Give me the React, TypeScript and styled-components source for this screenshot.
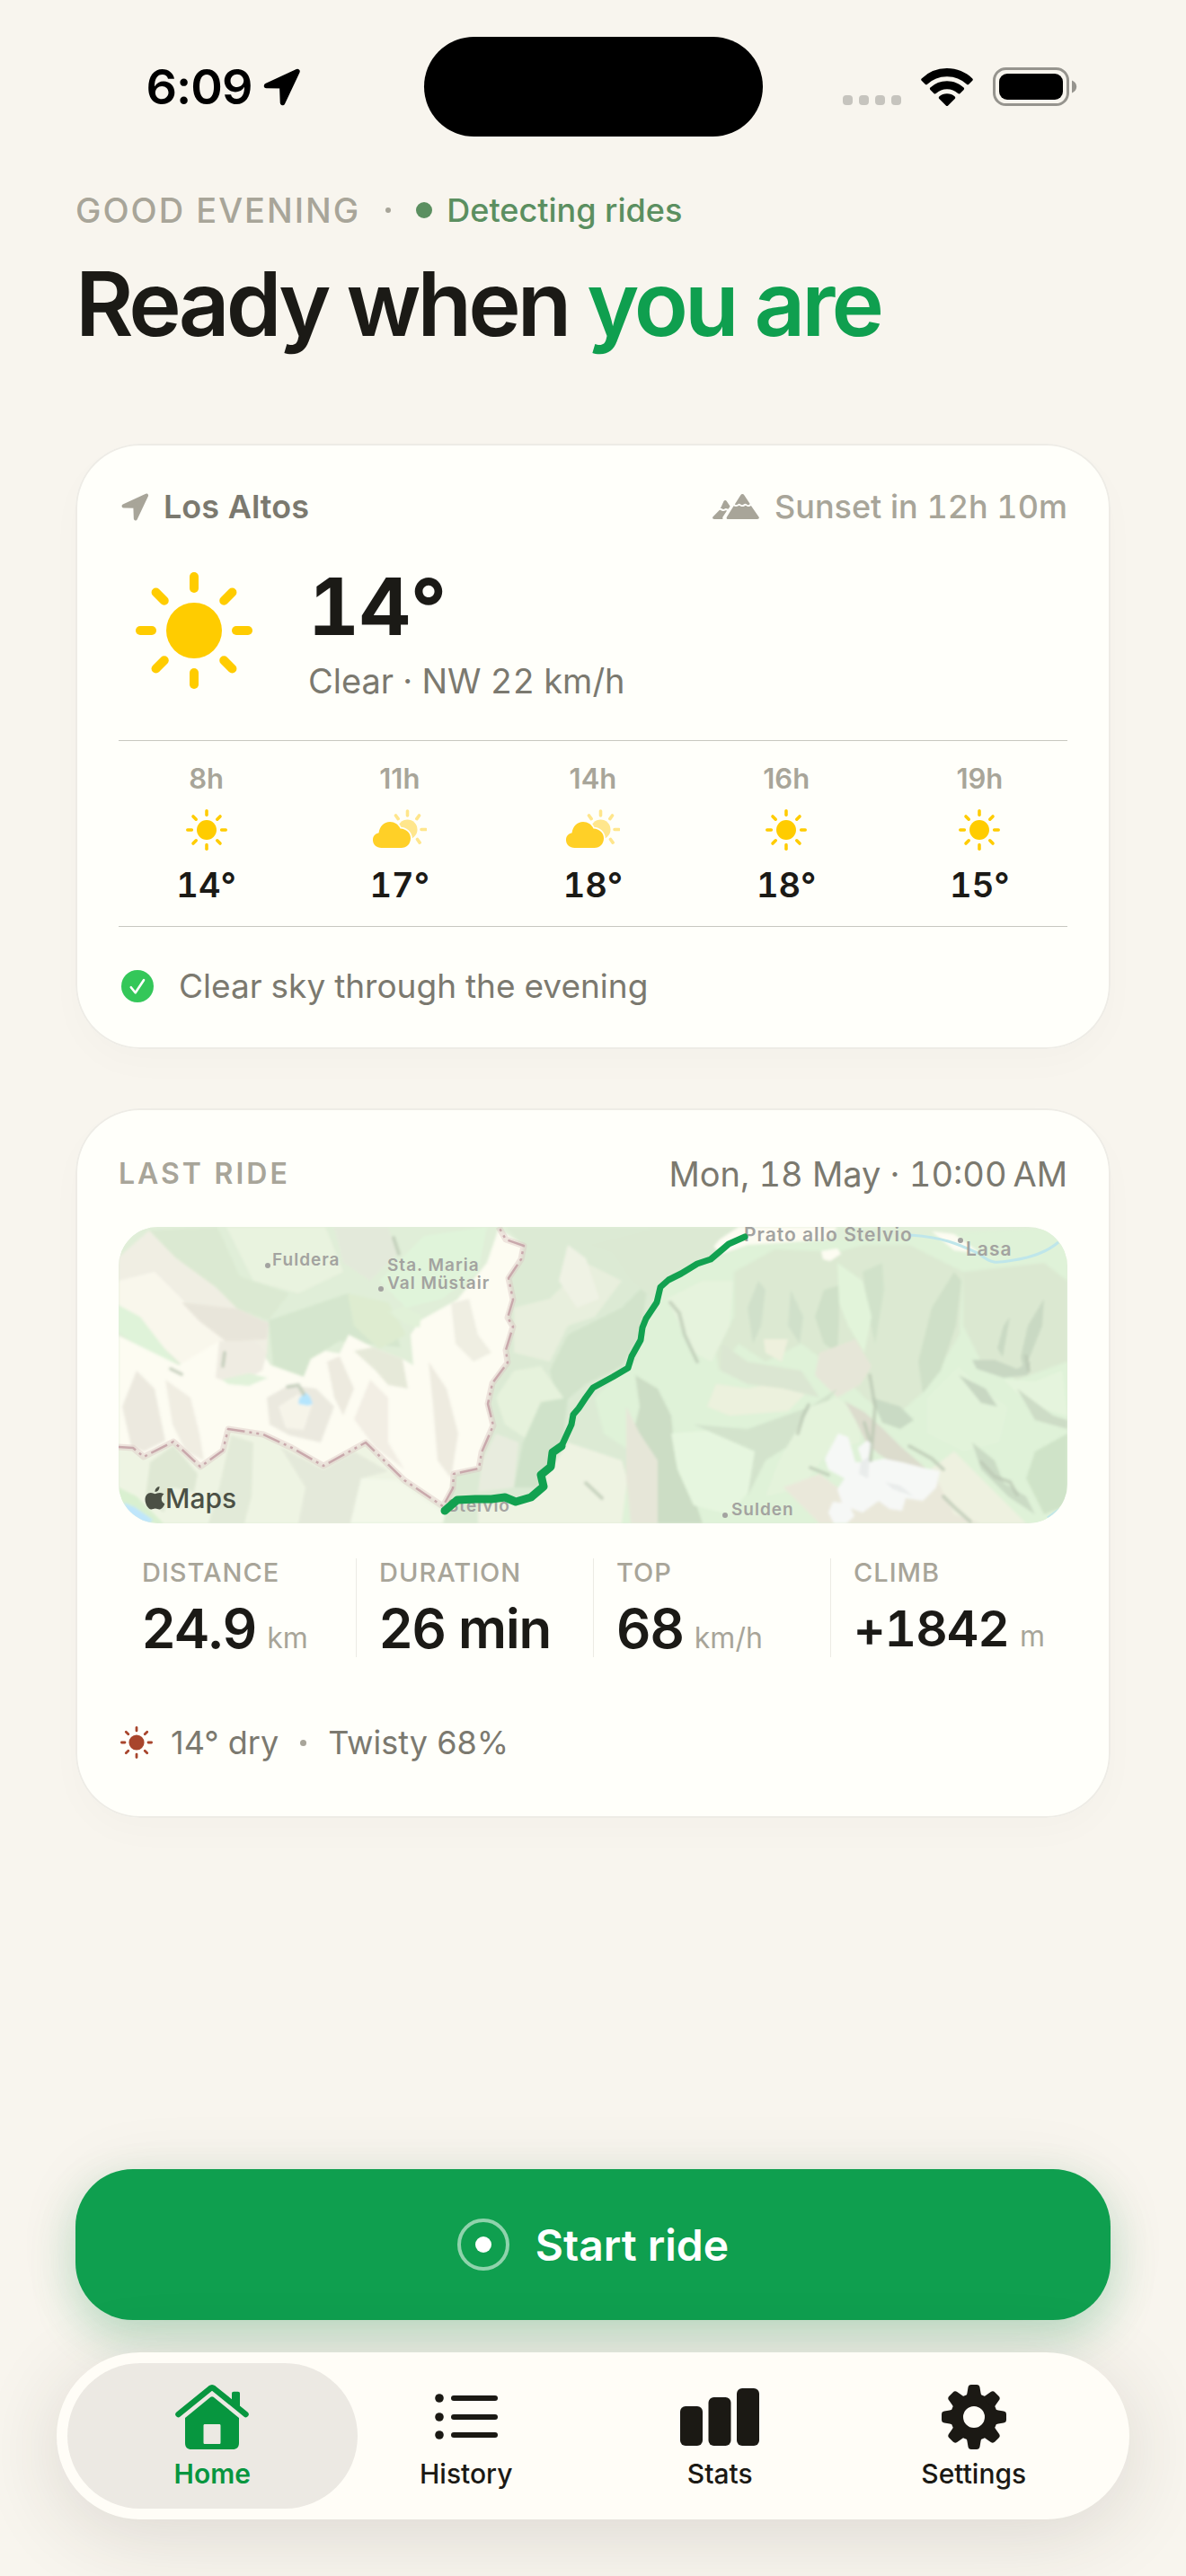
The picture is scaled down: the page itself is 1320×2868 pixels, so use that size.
import React from 'react';
import styled, { createGlobalStyle } from 'styled-components';

const GlobalStyle = createGlobalStyle`
  * {
    box-sizing: border-box;
  }

  body {
    margin: 0;
    background: #f8f5ee;
    color: #1b1a16;
    font-family: Inter, 'Liberation Sans', sans-serif;
    -webkit-font-smoothing: antialiased;
  }
`;

const Page = styled.div`
  display: flex;
  flex-direction: column;
  min-height: 100vh;
  padding: 41px 63px 63px;
  background: #f8f5ee;
`;

const StatusBar = styled.div`
  display: grid;
  grid-template-columns: 1fr 377px 1fr;
  align-items: center;
  height: 111px;
  margin: 0 -63px;
  color: #000000;
`;

const StatusTime = styled.div`
  display: flex;
  align-items: center;
  justify-content: flex-end;
  gap: 12px;
  padding-right: 137px;
  font-size: 54px;
  font-weight: 600;
  line-height: 64px;
  letter-spacing: -1px;
`;

const Island = styled.div`
  height: 111px;
  border-radius: 56px;
  background: #000000;
`;

const StatusIcons = styled.div`
  display: flex;
  align-items: center;
  gap: 22px;
  padding-left: 89px;
`;

const SignalDots = styled.div`
  display: flex;
  gap: 7px;
  margin-top: 30px;
`;

const SignalDot = styled.span`
  width: 11px;
  height: 11px;
  border-radius: 4px;
  background: #c6c4be;
`;

const Content = styled.main`
  display: flex;
  flex-direction: column;
  padding: 60px 21px 0;
`;

const Greeting = styled.div`
  display: flex;
  align-items: center;
  font-size: 38px;
  line-height: 44px;
  font-weight: 500;
  letter-spacing: 2px;
  color: #a8a599;
`;

const Dot = styled.span<{ size: number; color: string; space: number }>`
  width: ${props => props.size}px;
  height: ${props => props.size}px;
  margin: 0 ${props => props.space}px;
  border-radius: 50%;
  background: ${props => props.color};
`;

const Detecting = styled.span`
  display: flex;
  align-items: center;
  gap: 16px;
  font-size: 36px;
  letter-spacing: 0;
  color: #5b8f60;
`;

const Title = styled.h1`
  margin: 22px 0 0;
  font-size: 99px;
  font-weight: 600;
  line-height: 120px;
  letter-spacing: -4px;

  span {
    color: #0f9f4f;
  }
`;

const Card = styled.section`
  display: flex;
  flex-direction: column;
  padding: 48px;
  border-radius: 72px;
  background: #fffffa;
  box-shadow: inset 0 0 0 2px #eeece6, 0 16px 40px rgba(60, 50, 20, 0.02);
`;

const WeatherCard = styled(Card)`
  margin-top: 96px;
  font-variant-numeric: tabular-nums;
`;

const RideCard = styled(Card)`
  margin-top: 66px;
  padding-bottom: 62px;
`;

const CardHeader = styled.div`
  display: flex;
  align-items: center;
  justify-content: space-between;
  line-height: 44px;
`;

const Place = styled.div`
  display: flex;
  align-items: center;
  gap: 16px;
  padding-left: 3px;
  font-size: 36px;
  font-weight: 600;
  color: #7b796f;
`;

const Sunset = styled.div`
  display: flex;
  align-items: center;
  gap: 17px;
  font-size: 36px;
  font-weight: 500;
  color: #a8a599;
`;

const Current = styled.div`
  display: flex;
  align-items: center;
  gap: 62px;
  margin: 38px 0 44px;
  padding-left: 19px;
`;

const CurrentTemp = styled.div`
  font-size: 88px;
  font-weight: 700;
  line-height: 102px;
`;

const BodyText = styled.div<{ $large?: boolean }>`
  font-size: ${props => (props.$large ? 38 : 37)}px;
  line-height: 44px;
  color: #7b796f;
`;

const CurrentText = styled.div`
  display: flex;
  flex-direction: column;
  gap: 10px;
`;

const Hours = styled.div`
  display: grid;
  grid-template-columns: repeat(5, 1fr);
  column-gap: 20px;
  padding: 24px 0;
  border-top: 1px solid #c8c8c0;
  border-bottom: 1px solid #c8c8c0;
`;

const Hour = styled.div`
  display: flex;
  flex-direction: column;
  align-items: center;
  gap: 16px;
`;

const HourLabel = styled.div`
  font-size: 31px;
  font-weight: 600;
  line-height: 36px;
  font-variant-numeric: normal;
  color: #a8a599;
`;

const HourTemp = styled.div`
  font-size: 38px;
  font-weight: 600;
  line-height: 44px;
`;

const Alert = styled.div`
  display: flex;
  align-items: center;
  gap: 28px;
  margin-top: 44px;
  padding-left: 3px;
`;

const RideHeader = styled(CardHeader)`
  font-variant-numeric: tabular-nums;

  > * {
    line-height: 50px;
  }
`;

const Overline = styled.h2`
  margin: 0;
  font-size: 32px;
  font-weight: 600;
  letter-spacing: 3px;
  color: #a8a599;
`;

const MapFrame = styled.div`
  height: 330px;
  margin-top: 34px;
  border-radius: 44px;
  overflow: hidden;

  svg {
    display: block;
    width: 100%;
    height: 100%;
  }
`;

const Stats = styled.dl`
  display: grid;
  grid-template-columns: repeat(4, 1fr);
  margin: 39px 0 73px;
`;

const Stat = styled.div`
  display: flex;
  flex-direction: column;
  gap: 14px;
  padding-left: 25px;
  border-left: 1px solid #ecebe4;

  &:first-child {
    border-left-color: transparent;
  }
`;

const StatLabel = styled.dt`
  font-size: 29px;
  font-weight: 500;
  line-height: 32px;
  letter-spacing: 1px;
  color: #a8a599;
`;

const StatValue = styled.dd<{ $compact?: boolean }>`
  margin: 0;
  font-size: ${props => (props.$compact ? 55 : 60)}px;
  font-weight: 600;
  line-height: 64px;
  white-space: nowrap;
  letter-spacing: -1px;
  font-variant-numeric: ${props => (props.$compact ? 'tabular-nums' : 'normal')};
`;

const Unit = styled.span`
  margin-left: 12px;
  font-size: 32px;
  font-weight: 400;
  line-height: 32px;
  letter-spacing: 0;
  color: #a8a599;
`;

const RideMeta = styled.div`
  display: flex;
  align-items: center;
  padding-left: 2px;
  font-size: 36px;
  line-height: 44px;
  color: #7b796f;

  svg {
    margin-right: 20px;
  }
`;

const Dock = styled.footer`
  display: flex;
  flex-direction: column;
  gap: 36px;
  margin-top: auto;
`;

const StartButton = styled.button`
  display: flex;
  align-items: center;
  justify-content: center;
  gap: 29px;
  height: 168px;
  margin: 0 21px;
  padding: 0;
  border: 0;
  border-radius: 64px;
  background: #0f9f4f;
  box-shadow: 0 20px 50px rgba(15, 159, 79, 0.24), 0 0 80px rgba(40, 40, 20, 0.06);
  color: #ffffff;
  font-family: inherit;
  font-size: 48px;
  font-weight: 600;
  cursor: pointer;
`;

const TabBar = styled.nav`
  position: relative;
  display: grid;
  grid-template-columns: repeat(4, 1fr);
  height: 186px;
  padding: 12px 32px;
  border-radius: 93px;
  background: #fffdf7;
  box-shadow: 0 16px 90px rgba(50, 45, 35, 0.14);
`;

const Tab = styled.a<{ $active?: boolean }>`
  display: flex;
  flex-direction: column;
  align-items: center;
  gap: 9px;
  margin: 0 -20px;
  padding-top: 24px;
  border-radius: 81px;
  background: ${props => (props.$active ? '#ece9e3' : 'transparent')};
  color: ${props => (props.$active ? '#07963f' : '#1b1914')};
  font-size: 30px;
  font-weight: ${props => (props.$active ? 600 : 500)};
  line-height: 36px;
  text-decoration: none;
`;

const ArrowIcon = ({ size, color }: { size: number; color: string }) => (
  <svg width={size} height={size} viewBox="0 0 42 42">
    <path
      d="M3.500 19.500 38 3.500 21.500 38.500 20.800 19.800Z"
      fill={color}
      stroke={color}
      strokeWidth="5.500"
      strokeLinejoin="round"
    />
  </svg>
);

const WifiIcon = () => (
  <svg width="58" height="42" viewBox="0 0 58 42" fill="#000000">
    <path d="M29 0C40 0 50 4.300 57.300 11.400c.7.700.7 1.700 0 2.400l-4 4c-.7.700-1.700.7-2.400 0A31.300 31.300 0 0 0 29 9.200 31.300 31.300 0 0 0 7.100 17.800c-.7.700-1.700.7-2.400 0l-4-4c-.7-.7-.7-1.700 0-2.400A40.500 40.500 0 0 1 29 0Z" />
    <path d="M29 14.200c7.200 0 13.700 2.800 18.600 7.300.7.700.7 1.700 0 2.400l-4 4c-.7.700-1.700.7-2.400.1A18 18 0 0 0 29 23.300a18 18 0 0 0-12.200 4.700c-.7.600-1.700.6-2.400-.1l-4-4c-.7-.7-.7-1.700 0-2.400A27.300 27.300 0 0 1 29 14.200Z" />
    <path d="M29 28.300c3.300 0 6.400 1.200 8.700 3.200.7.700.7 1.700 0 2.400l-7.500 7.500c-.7.700-1.700.7-2.400 0l-7.500-7.500c-.7-.7-.7-1.700 0-2.400a13.300 13.300 0 0 1 8.700-3.200Z" />
  </svg>
);

const BatteryIcon = () => (
  <svg width="94" height="43" viewBox="0 0 94 43">
    <rect x="1.500" y="1.500" width="82" height="40" rx="13" fill="none" stroke="#96948e" strokeWidth="3" />
    <rect x="7" y="7" width="71" height="29" rx="9" fill="#000000" />
    <path d="M88 14.500c3.200 1.200 5.200 3.800 5.200 7s-2 5.800-5.200 7Z" fill="#96948e" />
  </svg>
);

const SunIcon = ({ size, color }: { size: number; color: string }) => (
  <svg width={size} height={size} viewBox="0 0 130 130">
    <circle cx="65" cy="65" r="31" fill={color} />
    {[0, 45, 90, 135, 180, 225, 270, 315].map(angle => (
      <path
        key={angle}
        d="M65 5v13"
        stroke={color}
        strokeWidth="10"
        strokeLinecap="round"
        transform={`rotate(${angle} 65 65)`}
      />
    ))}
  </svg>
);

const CloudSunIcon = () => (
  <svg width="60" height="46" viewBox="0 0 60 46">
    <g stroke="#ffe68c" strokeWidth="3.600" strokeLinecap="round">
      <path d="M38.500 2v5M25.500 7l2.600 3.600M51.500 7l-2.600 3.600M54 22.500h5M49.500 33.500l2.600 3.600" />
    </g>
    <circle cx="38.500" cy="22.500" r="11" fill="#ffe68c" />
    <path
      d="M9.500 43C4 43 0 39 0 34.200c0-4.200 2.600-7.200 6.600-8C7.300 19.300 12.400 14 19 14c5.200 0 9.400 2.900 11.500 7.500 6.500.2 11.500 4.800 11.500 10.700C42 38.400 37.600 43 31.500 43Z"
      fill="#ffd027"
      stroke="#fffffa"
      strokeWidth="3.500"
      paintOrder="stroke"
    />
  </svg>
);

const MountainIcon = () => (
  <svg width="52" height="28" viewBox="0 0 52 28" fill="#a8a599">
    <path d="M31.300 1.200c1-1.500 3-1.500 4 0l6.400 9.800c-1.200 1.500-2.600 1.500-3.800.3-1.200-.9-2-.9-3.200.2-1.200 1-2.300 1-3.500 0-1.100-1-1.900-1-3.100-.1-1.100.8-2.200.8-3.300 0Z" />
    <path d="M23.600 13.200c1.600 1 3.500.9 5 0 1-.7 1.200-.7 2.200 0 1.600 1.200 3.500 1.200 5.100 0 .8-.7 1.100-.7 2 0 1.500 1.200 3.500 1.100 5-.2l8.600 12.400c.9 1.500 0 2.600-1.600 2.600H17.400c-1.600 0-2.300-1.100-1.400-2.600Z" />
    <path d="M12.500 8c.8-1.200 2.500-1.200 3.300 0l3.800 5.800-1.900 2.800c-1.200.3-1.900-.6-3-.5-1.100.2-1.600 1.100-2.900.8-1-.3-1.400-1-2.900-.9Z" />
    <path d="M7.700 17.900c1.400-.3 2 1 3.700 1.200 1.700.1 2.300-1 3.400-.9l1.300.3-4.300 6.500c-.7 1.100-.7 2.100-.2 3H1.900C.3 28-.4 26.900.4 25.400Z" />
  </svg>
);

const CheckIcon = () => (
  <svg width="36" height="36" viewBox="0 0 36 36">
    <circle cx="18" cy="18" r="18" fill="#34c759" />
    <path d="m10.800 19.200 4.900 6 9.300-14" fill="none" stroke="#ffffff" strokeWidth="2.600" strokeLinecap="round" strokeLinejoin="round" />
  </svg>
);

const RecordIcon = () => (
  <svg width="58" height="58" viewBox="0 0 58 58">
    <circle cx="29" cy="29" r="27" fill="none" stroke="#8fd3ac" strokeWidth="4" />
    <circle cx="29" cy="29" r="9" fill="#ffffff" />
  </svg>
);

const HomeIcon = () => (
  <svg width="82" height="72" viewBox="0 0 82 72" fill="currentColor">
    <path d="M3.500 33 39 4.200c1.300-1 2.700-1 4 0L78.500 33" fill="none" stroke="currentColor" strokeWidth="6.500" strokeLinecap="round" strokeLinejoin="round" />
    <path d="M63 21V10c0-1.500.8-2.300 2.200-2.300h4.600c1.400 0 2.200.8 2.200 2.300v18Z" />
    <path
      fillRule="evenodd"
      d="M39.400 13.800c1-.8 2.200-.8 3.200 0L71 37v28c0 4.500-2.500 7-7 7H18c-4.500 0-7-2.500-7-7V37ZM33 44c-1 0-1.500.5-1.500 1.500v19c0 1 .5 1.500 1.500 1.500h16c1 0 1.500-.5 1.500-1.500v-19c0-1-.5-1.500-1.500-1.500Z"
    />
  </svg>
);

const ListIcon = () => (
  <svg width="70" height="72" viewBox="0 0 70 72" fill="currentColor">
    {[15, 36, 56].map(y => (
      <React.Fragment key={y}>
        <circle cx="5" cy={y} r="4.800" />
        <rect x="18" y={y - 3} width="52" height="6" rx="3" />
      </React.Fragment>
    ))}
  </svg>
);

const BarsIcon = () => (
  <svg width="88" height="72" viewBox="0 0 88 72" fill="currentColor">
    <rect x="0" y="24" width="25" height="44" rx="6" />
    <rect x="31.500" y="14" width="25" height="54" rx="6" />
    <rect x="63" y="4" width="25" height="64" rx="6" />
  </svg>
);

const GearIcon = () => (
  <svg width="72" height="72" viewBox="0 0 72 72">
    <circle cx="36" cy="36" r="19" fill="none" stroke="currentColor" strokeWidth="14" />
    {[0, 45, 90, 135, 180, 225, 270, 315].map(angle => (
      <path
        key={angle}
        d="M25 14c2.500-1 3-2.500 3.500-5l1-6C29.800 1 31 0 33 0h6c2 0 3.200 1 3.500 3l1 6c.5 2.500 1 4 3.500 5Z"
        fill="currentColor"
        transform={`rotate(${angle} 36 36)`}
      />
    ))}
  </svg>
);

// hillshade patches, drawn back to front
const terrain: { fill: string; d: string }[] = [
  { fill: '#e0eed8', d: 'M0 0H460V330H0Z' },
  { fill: '#dbe9d2', d: 'M34 4 110 0 135 55 190 74 167 104 132 91 63 34Z' },
  { fill: '#e9f3df', d: 'M120 0 230 0 250 50 200 74 150 60Z' },
  { fill: '#e3e9da', d: 'M240 0 300 0 310 30 280 60 250 40Z' },
  { fill: '#e0f4da', d: 'M340 10 410 0 400 50 360 80 320 90 290 60Z' },
  { fill: '#f0eee3', d: 'M0 34 34 4 63 34 108 67 132 91 167 107 165 141 112 174 71 154 0 87Z' },
  { fill: '#f9f7ec', d: 'M0 60 40 50 80 90 120 110 140 130 112 174 71 154 0 87Z' },
  { fill: '#e8e5da', d: 'M70 84 132 91 167 107 165 125 120 128 90 105Z' },
  { fill: '#dff3d9', d: 'M0 87 24 100 63 151 50 154 0 117Z' },
  { fill: '#d5e6ce', d: 'M167 104 255 74 300 90 314 134 246 127 214 147 206 167 172 154Z' },
  { fill: '#deecd0', d: 'M255 74 300 84 320 120 290 136 262 110Z' },
  { fill: '#fdfcf2', d: 'M0 121 67 154 112 127 152 127 169 154 206 167 214 147 230 138 246 141 256 120 283 134 316 147 328 154 325 120 336 104 377 81 410 40 423 2 451 21 448 36 434 57 439 81 433 101 439 111 431 137 433 151 416 174 411 197 417 221 404 251 401 269 373 275 372 291 361 311 318 282 275 240 228 266 193 246 161 231 122 225 116 249 91 267 61 239 28 256 16 246 0 245Z' },
  { fill: '#efece2', d: 'M112 127 152 127 165 140 160 160 130 176 108 168Z' },
  { fill: '#ece9df', d: 'M20 160 40 180 52 238 28 250 14 244 4 200Z' },
  { fill: '#f0ede2', d: 'M52 170 80 190 90 230 95 260 75 250 60 220Z' },
  { fill: '#ebe9df', d: 'M165 190 190 176 220 180 240 200 225 240 190 232 168 220Z' },
  { fill: '#f6f4e9', d: 'M178 200 200 186 216 196 206 226 186 224Z' },
  { fill: '#e6e9d9', d: 'M262 138 283 134 316 147 322 180 300 176 286 160Z' },
  { fill: '#f2eee4', d: 'M280 170 300 190 300 240 318 270 285 245 262 214Z' },
  { fill: '#edeadf', d: 'M232 150 246 144 262 180 250 210 240 190Z' },
  { fill: '#efeee2', d: 'M370 85 390 80 400 120 415 140 395 150 375 130Z' },
  { fill: '#eeebe0', d: 'M345 150 365 180 378 230 370 280 355 260 350 200Z' },
  { fill: '#e1f2da', d: 'M115 170 145 163 166 168 145 177 122 175Z' },
  { fill: '#e1f1d8', d: 'M301 95 316 88 337 98 335 112 318 108Z' },
  { fill: '#eef4e3', d: 'M0 245 16 246 28 256 61 239 91 267 116 249 122 225 161 231 193 246 228 266 275 240 318 282 361 311 440 306 440 330H0Z' },
  { fill: '#dfe8d4', d: 'M35 262 61 243 88 275 84 295 60 290 50 318 30 300Z' },
  { fill: '#e2ead8', d: 'M125 232 150 240 148 300 140 330 100 330 112 290Z' },
  { fill: '#e4e9da', d: 'M180 245 228 270 262 250 300 272 270 280 258 330 200 330 208 290Z' },
  { fill: '#f3f8e9', d: 'M270 280 310 282 361 318 380 330H258Z' },
  { fill: '#d9f0d0', d: 'M0 290 20 300 50 330 0 330Z' },
  { fill: '#bfe6fb', d: 'M6 307 18 312 38 326 34 330 20 330 8 318Z' },
  { fill: '#b5e5fd', d: 'M208 184 213 189 216 197 211 199 200 197 201 191Z' },
  { fill: '#dcead4', d: 'M431 0H700V330H361L373 275 401 269 404 251 417 221 411 197 416 174 433 151 431 137 439 111 433 101 439 81 434 57 448 36 451 21Z' },
  { fill: '#e8efdd', d: 'M440 90 480 80 520 40 560 60 530 100 500 110 480 150 440 140Z' },
  { fill: '#eff2e4', d: 'M500 20 520 35 535 80 510 90 490 60Z' },
  { fill: '#d2e3cb', d: 'M500 120 560 90 590 60 580 120 560 155 520 175 490 200 480 160Z' },
  { fill: '#e6f2dc', d: 'M440 160 470 155 495 190 490 220 460 240 430 220 420 190Z' },
  { fill: '#cfe2c9', d: 'M470 195 500 190 495 235 480 260 465 290 440 290 450 240Z' },
  { fill: '#e8ecde', d: 'M420 230 445 240 440 290 400 295 405 260Z' },
  { fill: '#eef3e2', d: 'M400 310 460 303 500 240 560 260 580 330H400Z' },
  { fill: '#dff2d8', d: 'M530 190 560 160 575 150 600 67 640 45 700 20 1056 0V330H560L570 250 540 230Z' },
  { fill: '#fdfcf2', d: 'M690 0 660 20 672 30 700 20 790 14 800 0Z' },
  { fill: '#dce9d3', d: 'M520 20 600 0 680 0 660 25 610 55 595 80 570 60 550 30Z' },
  { fill: '#dce9d2', d: 'M685 50 730 25 800 28 830 20 880 20 940 50 936 120 900 180 860 215 830 190 800 160 760 130 720 150 690 130 668 160 665 140 685 100Z' },
  { fill: '#e6f3dd', d: 'M610 80 650 60 684 60 680 110 660 150 640 140Z' },
  { fill: '#cfe0c8', d: 'M930 50 938 60 932 110 915 160 895 185 890 150 905 90Z' },
  { fill: '#cfe0c8', d: 'M785 70 802 65 802 100 800 140 785 130 775 100Z' },
  { fill: '#d1e2ca', d: 'M828 50 850 40 852 70 842 130 835 100Z' },
  { fill: '#e2f4da', d: 'M800 40 828 60 838 100 830 140 812 110 802 85Z' },
  { fill: '#d0e0ca', d: 'M712 60 720 70 715 110 706 130 700 90ZM748 70 762 100 758 130 745 110Z' },
  { fill: '#e6e6d8', d: 'M780 140 820 125 838 155 826 175 800 190 775 165Z' },
  { fill: '#eef0dd', d: 'M718 125 745 125 738 150 720 140Z' },
  { fill: '#ecf1dd', d: 'M665 175 700 180 740 172 765 185 745 205 680 210 655 200Z' },
  { fill: '#dbe6d2', d: 'M672 130 700 150 760 160 780 190 740 180 700 175 670 160Z' },
  { fill: '#ccddc5', d: 'M575 165 600 180 615 210 620 260 640 300 650 330 600 330 570 240 580 200Z' },
  { fill: '#e6e6d8', d: 'M565 200 580 230 600 260 600 330 570 330 565 280Z' },
  { fill: '#e6f6df', d: 'M615 230 680 225 720 240 705 290 680 320 640 310 622 270Z' },
  { fill: '#d3e3cc', d: 'M640 220 700 225 770 200 800 180 760 235 720 260 700 300 708 250Z' },
  { fill: '#e4f3db', d: 'M770 200 800 190 825 210 825 240 790 250 760 290 720 300 735 260Z' },
  { fill: '#dcdccd', d: 'M808 194 830 206 850 224 870 244 900 270 880 275 845 252 832 240 820 215Z' },
  { fill: '#c9dac4', d: 'M838 190 870 200 885 215 870 225 850 218Z' },
  { fill: '#e2f3da', d: 'M900 190 935 155 960 180 990 200 980 240 940 250 900 230Z' },
  { fill: '#dbe8d1', d: 'M940 50 1030 40 1056 60 1056 150 1000 170 960 150 940 110Z' },
  { fill: '#c9d9c3', d: 'M1012 110 1030 80 1028 110 1012 150 1008 162 1004 145ZM985 110 992 100 984 145 978 135Z' },
  { fill: '#c8d7c2', d: 'M950 148 975 148 1000 158 1015 150 1012 165 985 168 955 158ZM935 165 965 180 978 200 960 196Z' },
  { fill: '#e5f4dd', d: 'M985 170 1020 172 1050 160 1056 210 1020 200 1000 185Z' },
  { fill: '#cddcc6', d: 'M1000 180 1040 210 1056 215 1056 225 1020 215Z' },
  { fill: '#cbdbc5', d: 'M950 240 975 260 985 285 1010 300 1020 320 990 300 960 270Z' },
  { fill: '#eef1e0', d: 'M890 280 930 250 970 290 1010 330 900 330Z' },
  { fill: '#cfe3c8', d: 'M1020 250 1056 230V310L1030 320 1010 280Z' },
  { fill: '#eae8da', d: 'M740 290 780 275 800 290 870 300 905 270 930 320 960 330H780Z' },
  { fill: '#f6f8f6', d: 'M801 230 812 234 820 262 828 262 823 246 834 237 840 243 832 262 852 258 872 262 895 268 914 272 910 290 895 305 876 302 872 316 858 314 846 305 828 318 806 310 800 292 808 280 790 270 786 258ZM795 306 812 308 819 322 810 330H796L790 318Z' },
  { fill: '#e9eceb', d: 'M826 262 836 255 834 280 824 275ZM853 284 870 288 885 300 862 292Z' },
  { fill: '#fdfcf2', d: 'M782 27 800 24 804 30 792 38 784 36ZM905 5 930 8 960 30 930 26Z' },
];

// soft valley shadows along the ridges
const creases = [
  'M614 84 624 96 630 120 644 150',
  'M768 198 762 210 756 230',
  'M830 218 836 238',
  'M837 260 842 200 836 165',
  'M770 268 790 276',
  'M1010 144 1013 160',
  'M880 244 905 258 918 270',
  'M960 262 975 278 992 284 1000 298',
  'M58 158 70 164',
  'M188 178 200 176 206 186',
  'M118 140 116 155',
  'M312 30 306 12',
  'M520 285 538 302',
  'M918 300 930 312 948 328',
];

const frontier =
  'M0 245 16 246 28 256 61 239 91 267 116 249 122 225 161 231 193 246 228 266 275 240 318 282 361 311 372 291 373 275 401 269 404 251 417 221 411 197 416 174 433 151 431 137 439 111 433 101 439 81 434 57 448 36 451 21 431 14 423 0';

const RouteMap = () => (
  <svg viewBox="0 0 1056 330" preserveAspectRatio="xMidYMid slice" role="img" aria-label="Route map">
    <defs>
      <filter id="relief" x="-5%" y="-5%" width="110%" height="110%">
        <feGaussianBlur stdDeviation="1.600" />
      </filter>
    </defs>
    <rect width="1056" height="330" fill="#e1efd9" />
    <g filter="url(#relief)">
      {terrain.map(patch => (
        <path key={patch.d} d={patch.d} fill={patch.fill} />
      ))}
      {creases.map(d => (
        <path key={d} d={d} fill="none" stroke="#b9c6b2" strokeWidth="4" strokeLinecap="round" opacity="0.7" />
      ))}
    </g>
    <path d={frontier} fill="none" stroke="#d9c3c0" strokeWidth="7" strokeLinejoin="round" opacity="0.4" />
    <path d={frontier} fill="none" stroke="#c9a9ac" strokeWidth="2.500" strokeDasharray="20 5 3 5 3 5" strokeLinejoin="round" />
    <path d="M880 9C920 11 940 22 958 30c14 12 20 10 38 7 20-3 36-8 50-20M1056 308l-22 16" fill="none" stroke="#bfe6ea" strokeWidth="3" />
    <g fill="#a3a3a0" fontSize="19" fontWeight="600" letterSpacing="1" fontFamily="Inter, sans-serif">
      <circle cx="166" cy="43" r="3" />
      <text x="171" y="43">Fuldera</text>
      <text x="299" y="49">Sta. Maria</text>
      <circle cx="292" cy="69" r="3" />
      <text x="299" y="69">Val Müstair</text>
      <text x="696" y="16" fontSize="21">Prato allo Stelvio</text>
      <circle cx="937" cy="15" r="3" />
      <text x="943" y="32" fontSize="21">Lasa</text>
      <circle cx="675" cy="321" r="3" />
      <text x="682" y="321">Sulden</text>
      <text x="366" y="317">Stelvio</text>
    </g>
    <path
      d="M697 11 679 19 672 25 659 36 644 41 626 52 612 59 603 67 599 84 587 102 583 112 581 126 571 144 567 157 550 167 528 179 520 190 512 202 506 209 504 220 493 244 483 251 481 267"
      fill="none"
      stroke="#12a150"
      strokeWidth="7"
      strokeLinecap="round"
      strokeLinejoin="round"
    />
    <path
      d="M493 244 483 251 481 267 470 276 473 289 459 301 442 306 430 301 415 303 397 303 377 304 363 316"
      fill="none"
      stroke="#12a150"
      strokeWidth="9"
      strokeLinecap="round"
      strokeLinejoin="round"
    />
    <g fill="#4b5045">
      <path d="M46 296c2.500 0 4.500 1.500 4.500 1.500-4 2.500-3.500 9 .8 10.700-1 3.300-3.800 6.300-6 6.300-1.800 0-2.500-1-4.500-1s-2.800 1-4.500 1C33 314.500 29.500 308.500 29.500 303.500c0-4.500 2.800-7.500 6.300-7.500 2 0 3.500 1.200 4.700 1.200S43.500 296 46 296Z" />
      <path d="M45.500 289c.2 3-2 6-5 6-.3-3 2.200-5.800 5-6Z" />
      <text x="52" y="313" fontSize="30" fontWeight="500" fontFamily="Inter, sans-serif">
        Maps
      </text>
    </g>
  </svg>
);

const hours = [
  { label: '8h', temp: '14°', cloudy: false },
  { label: '11h', temp: '17°', cloudy: true },
  { label: '14h', temp: '18°', cloudy: true },
  { label: '16h', temp: '18°', cloudy: false },
  { label: '19h', temp: '15°', cloudy: false },
];

const stats = [
  { label: 'DISTANCE', value: '24.9', unit: 'km' },
  { label: 'DURATION', value: '26 min' },
  { label: 'TOP', value: '68', unit: 'km/h' },
  { label: 'CLIMB', value: '+1842', unit: 'm', compact: true },
];

const tabs = [
  { label: 'Home', Icon: HomeIcon },
  { label: 'History', Icon: ListIcon },
  { label: 'Stats', Icon: BarsIcon },
  { label: 'Settings', Icon: GearIcon },
];

const App: React.FC = () => {
  return (
    <Page>
      <GlobalStyle />
      <StatusBar>
        <StatusTime>
          6:09
          <ArrowIcon size={42} color="#000000" />
        </StatusTime>
        <Island />
        <StatusIcons>
          <SignalDots>
            <SignalDot />
            <SignalDot />
            <SignalDot />
            <SignalDot />
          </SignalDots>
          <WifiIcon />
          <BatteryIcon />
        </StatusIcons>
      </StatusBar>

      <Content>
        <Greeting>
          GOOD EVENING
          <Dot size={6} color="#a8a599" space={28} />
          <Detecting>
            <Dot size={18} color="#5b8f60" space={0} />
            Detecting rides
          </Detecting>
        </Greeting>
        <Title>
          Ready when <span>you are</span>
        </Title>

        <WeatherCard>
          <CardHeader>
            <Place>
              <ArrowIcon size={31} color="#a8a599" />
              Los Altos
            </Place>
            <Sunset>
              <MountainIcon />
              Sunset in 12h 10m
            </Sunset>
          </CardHeader>
          <Current>
            <SunIcon size={130} color="#ffcc00" />
            <CurrentText>
              <CurrentTemp>14°</CurrentTemp>
              <BodyText $large>Clear · NW 22 km/h</BodyText>
            </CurrentText>
          </Current>
          <Hours>
            {hours.map(hour => (
              <Hour key={hour.label}>
                <HourLabel>{hour.label}</HourLabel>
                {hour.cloudy ? <CloudSunIcon /> : <SunIcon size={46} color="#ffcc00" />}
                <HourTemp>{hour.temp}</HourTemp>
              </Hour>
            ))}
          </Hours>
          <Alert>
            <CheckIcon />
            <BodyText>Clear sky through the evening</BodyText>
          </Alert>
        </WeatherCard>

        <RideCard>
          <RideHeader>
            <Overline>LAST RIDE</Overline>
            <BodyText $large>Mon, 18 May · 10:00{'\u202f'}AM</BodyText>
          </RideHeader>
          <MapFrame>
            <RouteMap />
          </MapFrame>
          <Stats>
            {stats.map(stat => (
              <Stat key={stat.label}>
                <StatLabel>{stat.label}</StatLabel>
                <StatValue $compact={stat.compact}>
                  {stat.value}
                  {stat.unit && <Unit>{stat.unit}</Unit>}
                </StatValue>
              </Stat>
            ))}
          </Stats>
          <RideMeta>
            <SunIcon size={36} color="#a8452c" />
            14° dry
            <Dot size={7} color="#a8a599" space={24} />
            Twisty 68%
          </RideMeta>
        </RideCard>
      </Content>

      <Dock>
        <StartButton type="button">
          <RecordIcon />
          Start ride
        </StartButton>
        <TabBar>
          {tabs.map(({ label, Icon }, index) => (
            <Tab key={label} href={`#${label.toLowerCase()}`} $active={index === 0}>
              <Icon />
              {label}
            </Tab>
          ))}
        </TabBar>
      </Dock>
    </Page>
  );
};

export default App;
